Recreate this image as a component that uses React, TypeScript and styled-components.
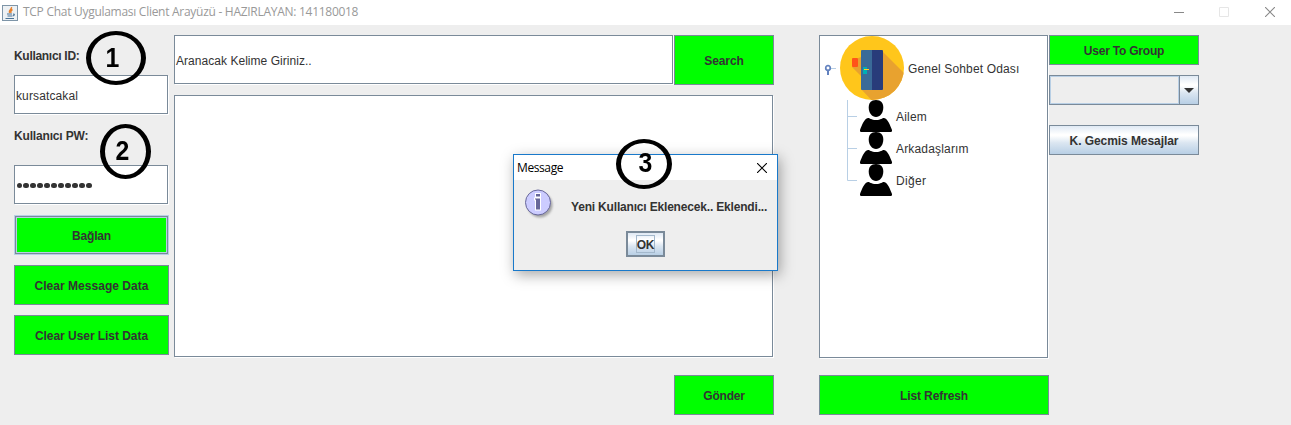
import React from 'react';
import styled, { createGlobalStyle, css } from 'styled-components';

const line = '#7a8a99';
const green = '#00ff00';
const metal = 'linear-gradient(#dfe9f4 0%, #ffffff 30%, #ffffff 35%, #dbe6f1 60%, #b8cfe5 100%)';

const Global = createGlobalStyle`
  * { box-sizing: border-box; }
  body { margin: 0; background: #eeeeee; }
`;

const Window = styled.div`
  position: relative;
  width: 1291px;
  height: 425px;
  overflow: hidden;
  background: #eeeeee;
  color: #333333;
  font: 12px 'Liberation Sans', Arial, sans-serif;
`;

const TitleBar = styled.header`
  display: flex;
  align-items: center;
  height: 25px;
  padding-left: 2px;
  background: #fff;
`;

const Title = styled.span`
  margin-left: 5px;
  flex: 1;
  color: #999;
  font: 12px/23px 'Open Sans', 'Noto Sans', sans-serif;
  letter-spacing: -0.28px;
  padding-bottom: 2px;
  white-space: nowrap;
`;

const Controls = styled.div`
  display: flex;
  padding: 0 16px 1px 0;
`;

const ControlIcon = styled.svg<{ $gap: number }>`
  display: block;
  margin-right: ${(p) => p.$gap}px;
`;

const Content = styled.main`
  display: flex;
  height: 400px;
  padding: 10px 0 0 14px;
`;

const Column = styled.div<{ $width: number; $left?: number }>`
  display: flex;
  flex-direction: column;
  flex: none;
  width: ${(p) => p.$width}px;
  margin-left: ${(p) => p.$left ?? 0}px;
`;

const Row = styled.div`
  display: flex;
`;

const Text = styled.span<{ $spacing?: number }>`
  letter-spacing: ${(p) => p.$spacing ?? 0}px;
  white-space: nowrap;
`;

const Label = styled.div`
  display: flex;
  align-items: center;
  height: 40px;
  padding-top: 1px;
  font-weight: bold;
`;

const sunken = css`
  background: #fff;
  border: 1px solid ${line};
  box-shadow: 1px 1px 0 #fff;
`;

const Field = styled.div<{ $height: number; $top?: number }>`
  ${sunken}
  display: flex;
  align-items: center;
  flex: 1 0 auto;
  height: ${(p) => p.$height - 1}px;
  margin: ${(p) => p.$top ?? 0}px 1px 1px 0;
  padding: 2px 0 0 1px;
`;

const FieldSlot = styled.div`
  display: flex;
`;

const TextArea = styled.div`
  ${sunken}
  height: 262px;
  margin: 10px 1px 18px 0;
`;

const Button = styled.button<{ $height: number; $width?: number; $top?: number; $metal?: boolean; $focus?: boolean }>`
  display: flex;
  flex: none;
  align-items: center;
  justify-content: center;
  align-self: ${(p) => (p.$width ? 'flex-end' : 'stretch')};
  width: ${(p) => (p.$width ? `${p.$width}px` : 'auto')};
  height: ${(p) => p.$height}px;
  margin: ${(p) => p.$top ?? 0}px 0 0;
  padding: 1px 0 0;
  border: 1px solid ${line};
  border-radius: 0;
  background: ${(p) => (p.$metal ? metal : green)};
  color: #333;
  font: bold 12px 'Liberation Sans', Arial, sans-serif;
  ${(p) => p.$focus && css`
    border-color: #b8cfe5;
    box-shadow: inset 0 0 0 1px ${line}, inset 0 0 0 2px #b8cfe5;
  `}
`;

const Dots = styled.div`
  display: flex;
  gap: 1.4px;
  padding-left: 0.5px;
`;

const Dot = styled.i`
  width: 5.6px;
  height: 5.6px;
  border-radius: 50%;
  background: #333;
`;

const Tree = styled.div`
  ${sunken}
  height: 323px;
  margin: 0 1px 17px 0;
`;

const TreeRoot = styled.div`
  display: flex;
  align-items: center;
  height: 64px;
  padding-left: 4px;
`;

const RootName = styled.span`
  margin: 2px 0 0 4px;
`;

const Leaf = styled.div`
  display: flex;
  align-items: center;
  height: 32px;
  padding-left: 27px;
`;

const LeafName = styled.span`
  margin: 2px 0 0 4px;
`;

const Combo = styled.div`
  display: flex;
  height: 30px;
  margin: 10px 0 20px;
  border: 1px solid ${line};
`;

const ComboValue = styled.div`
  flex: 1;
  border: 1px solid #b8cfe5;
`;

const ComboArrow = styled.div`
  display: flex;
  align-items: center;
  justify-content: center;
  width: 19px;
  padding-top: 1px;
  border-left: 1px solid ${line};
  background: ${metal};
`;

const Dialog = styled.section`
  position: absolute;
  left: 513px;
  top: 154px;
  width: 265px;
  height: 117px;
  border: 1px solid #1979ca;
  background: #eee;
  box-shadow: 2px 4px 13px rgba(0, 0, 0, 0.34);
`;

const DialogTitle = styled.header`
  display: flex;
  align-items: center;
  justify-content: space-between;
  height: 25px;
  padding: 0 10px 0 3px;
  background: #fff;
  color: #000;
  font: 12px 'Open Sans', 'Noto Sans', sans-serif;
`;

const DialogBody = styled.div`
  display: flex;
  height: 51px;
  padding: 9px 0 0 10px;
  font-weight: bold;
`;

const DialogMessage = styled.div`
  margin: 11px 0 0 13px;
`;

const OkButton = styled.button`
  display: flex;
  align-items: center;
  justify-content: center;
  width: 39px;
  height: 26px;
  margin-left: 112px;
  padding: 0;
  border: 2px solid ${line};
  background: ${metal};
`;

const OkFocus = styled.span`
  display: flex;
  justify-content: center;
  width: 19px;
  height: 18px;
  border: 1px solid #a3b8cc;
  color: #333;
  font: bold 12px/18px 'Liberation Sans', Arial, sans-serif;
  letter-spacing: -0.3px;
`;

const Marker = styled.div<{ $x: number; $y: number; $w: number; $h: number; $right?: number; $left?: number; $bottom?: number }>`
  position: absolute;
  left: ${(p) => p.$x}px;
  top: ${(p) => p.$y}px;
  display: flex;
  align-items: center;
  justify-content: center;
  width: ${(p) => p.$w}px;
  height: ${(p) => p.$h}px;
  padding: 0 ${(p) => p.$right ?? 0}px ${(p) => p.$bottom ?? 0}px ${(p) => p.$left ?? 0}px;
  border: solid #000;
  border-width: 4px 5px;
  border-radius: 50%;
  color: #000;
  font: bold 27px 'Liberation Sans', Arial, sans-serif;
`;

const Digit = styled.span`
  transform: scaleX(0.92);
`;

const JavaIcon = () => (
  <svg width="16" height="16" viewBox="0 0 16 16">
    <rect x=".5" y=".5" width="15" height="15" fill="#edf1f4" stroke="#7e95a8" />
    <path d="M9.500 2C10.300 4.300 6 5 7.500 8M10.500 4.500C8.500 5.500 8.500 6.500 9 8" fill="none" stroke="#e8802a" strokeWidth="1.400" />
    <path d="M5 9h5M5.500 11h4.500M3.500 13.500h8.500M11 9c2 0 1.500 1.800-.5 2" fill="none" stroke="#4a7396" strokeWidth="1.200" />
  </svg>
);

const DoorIcon = () => (
  <svg width="64" height="64" viewBox="0 0 64 64">
    <defs><clipPath id="disc"><circle cx="32" cy="32" r="32" /></clipPath></defs>
    <circle cx="32" cy="32" r="32" fill="#ffc61b" />
    <path clipPath="url(#disc)" d="M12 31l6-9 24-7 28 28v28H38L21 53V40z" fill="#e8a22f" />
    <rect x="12" y="22" width="6" height="9" rx="1" fill="#ff5419" />
    <path d="M22 14h10v40H22q-1 0-1-1V15q0-1 1-1z" fill="#3a6b98" />
    <path d="M32 14h10q1 0 1 1v38q0 1-1 1H32z" fill="#283c7a" />
    <rect x="23" y="31" width="4" height="7" fill="#00aeb5" />
    <rect x="24" y="33" width="5" height="1" fill="#ffd321" />
  </svg>
);

const Handle = () => (
  <svg width="16" height="20" viewBox="0 0 16 20">
    <path d="M7 10.500h5" stroke="#b8cfe5" />
    <circle cx="4" cy="10" r="2.300" fill="#fff" stroke="#6382bf" strokeWidth="1.700" />
    <path d="M4 12v5" stroke="#6382bf" strokeWidth="2" />
  </svg>
);

const Branch = ({ last }: { last?: boolean }) => (
  <svg width="13" height="32" viewBox="0 0 13 32">
    <path d={last ? 'M.5 0v16.500H10' : 'M.5 0v32M.5 16.500H10'} fill="none" stroke="#b8cfe5" />
  </svg>
);

const Person = () => (
  <svg width="32" height="32" viewBox="0 0 32 32">
    <path d="M16 0c5 0 7.300 3 7.300 7.500C23.300 13 20 17 16 17S8.700 13 8.700 7.500C8.700 3 11 0 16 0z" />
    <path d="M8 18c2 0 3 2 8 2s6-2 8-2c4 1 6 7 8 12 .3 1-.3 2-1.500 2h-29C.3 32-.3 31 0 30c2-5 4-11 8-12z" />
  </svg>
);

const InfoIcon = () => (
  <svg width="34" height="34" viewBox="0 0 34 34">
    <defs><filter id="soft"><feGaussianBlur stdDeviation="1" /></filter></defs>
    <circle cx="16" cy="16" r="12.500" fill="#777" opacity=".6" filter="url(#soft)" />
    <circle cx="14" cy="13.500" r="12.500" fill="#ccccff" stroke="#666699" />
    <path d="M11 4h6v4.500h-6zM10 8.500h7v13h-6v-10h-1z" fill="#fff" />
    <path d="M12 5h4v2.500h-4zM11 9.500h5v11h-4v-10h-1z" fill="#666699" />
  </svg>
);

const Cross = ({ color }: { color: string }) => (
  <svg width="10" height="10" viewBox="0 0 10 10">
    <path d="M0 0l10 10M10 0L0 10" stroke={color} strokeWidth="1.100" />
  </svg>
);

export default function App() {
  return (
    <Window>
      <Global />
      <TitleBar>
        <JavaIcon />
        <Title>TCP Chat Uygulaması Client Arayüzü - HAZIRLAYAN: 141180018</Title>
        <Controls>
          <ControlIcon $gap={35} width="10" height="10"><path d="M0 5.500h10" stroke="#888" /></ControlIcon>
          <ControlIcon $gap={36} width="10" height="10"><path d="M.5.500h9v9h-9z" fill="none" stroke="#e6e6e6" /></ControlIcon>
          <Cross color="#888" />
        </Controls>
      </TitleBar>
      <Content>
        <Column $width={155}>
          <Label><Text $spacing={-0.3}>Kullanıcı ID:</Text></Label>
          <FieldSlot><Field $height={40}><Text $spacing={0.12}>kursatcakal</Text></Field></FieldSlot>
          <Label><Text $spacing={-0.17}>Kullanıcı PW:</Text></Label>
          <FieldSlot>
            <Field $height={40} $top={10}>
              <Dots>{Array.from({ length: 11 }, (_, i) => <Dot key={i} />)}</Dots>
            </Field>
          </FieldSlot>
          <Button $height={40} $top={10} $focus><Text $spacing={-0.2}>Bağlan</Text></Button>
          <Button $height={40} $top={10}><Text $spacing={0.03}>Clear Message Data</Text></Button>
          <Button $height={40} $top={10}><Text $spacing={-0.05}>Clear User List Data</Text></Button>
        </Column>
        <Column $width={600} $left={5}>
          <Row>
            <Field $height={50}><Text $spacing={0.04}>Aranacak Kelime Giriniz..</Text></Field>
            <Button $height={50} $width={100}><Text $spacing={-0.1}>Search</Text></Button>
          </Row>
          <TextArea />
          <Button $height={40} $width={100}><Text $spacing={-0.2}>Gönder</Text></Button>
        </Column>
        <Column $width={230} $left={45}>
          <Tree>
            <TreeRoot><Handle /><DoorIcon /><RootName><Text $spacing={0.15}>Genel Sohbet Odası</Text></RootName></TreeRoot>
            <Leaf><Branch /><Person /><LeafName><Text $spacing={0.2}>Ailem</Text></LeafName></Leaf>
            <Leaf><Branch /><Person /><LeafName><Text $spacing={0.17}>Arkadaşlarım</Text></LeafName></Leaf>
            <Leaf><Branch last /><Person /><LeafName><Text $spacing={0.3}>Diğer</Text></LeafName></Leaf>
          </Tree>
          <Button $height={40}><Text $spacing={-0.1}>List Refresh</Text></Button>
        </Column>
        <Column $width={150}>
          <Button $height={30}><Text $spacing={-0.22}>User To Group</Text></Button>
          <Combo>
            <ComboValue />
            <ComboArrow><svg width="10" height="5"><path d="M0 0h10L5 5z" fill="#333" /></svg></ComboArrow>
          </Combo>
          <Button $height={30} $metal><Text $spacing={-0.07}>K. Gecmis Mesajlar</Text></Button>
        </Column>
      </Content>
      <Dialog>
        <DialogTitle><Text $spacing={-0.4}>Message</Text><Cross color="#000" /></DialogTitle>
        <DialogBody>
          <InfoIcon />
          <DialogMessage><Text $spacing={-0.18}>Yeni Kullanıcı Eklenecek.. Eklendi...</Text></DialogMessage>
        </DialogBody>
        <OkButton><OkFocus>OK</OkFocus></OkButton>
      </Dialog>
      <Marker $x={86} $y={31} $w={60} $h={54} $right={6}><Digit>1</Digit></Marker>
      <Marker $x={100} $y={124} $w={51} $h={55} $right={5}><Digit>2</Digit></Marker>
      <Marker $x={616} $y={139} $w={56} $h={50} $left={3} $bottom={2}><Digit>3</Digit></Marker>
    </Window>
  );
}
